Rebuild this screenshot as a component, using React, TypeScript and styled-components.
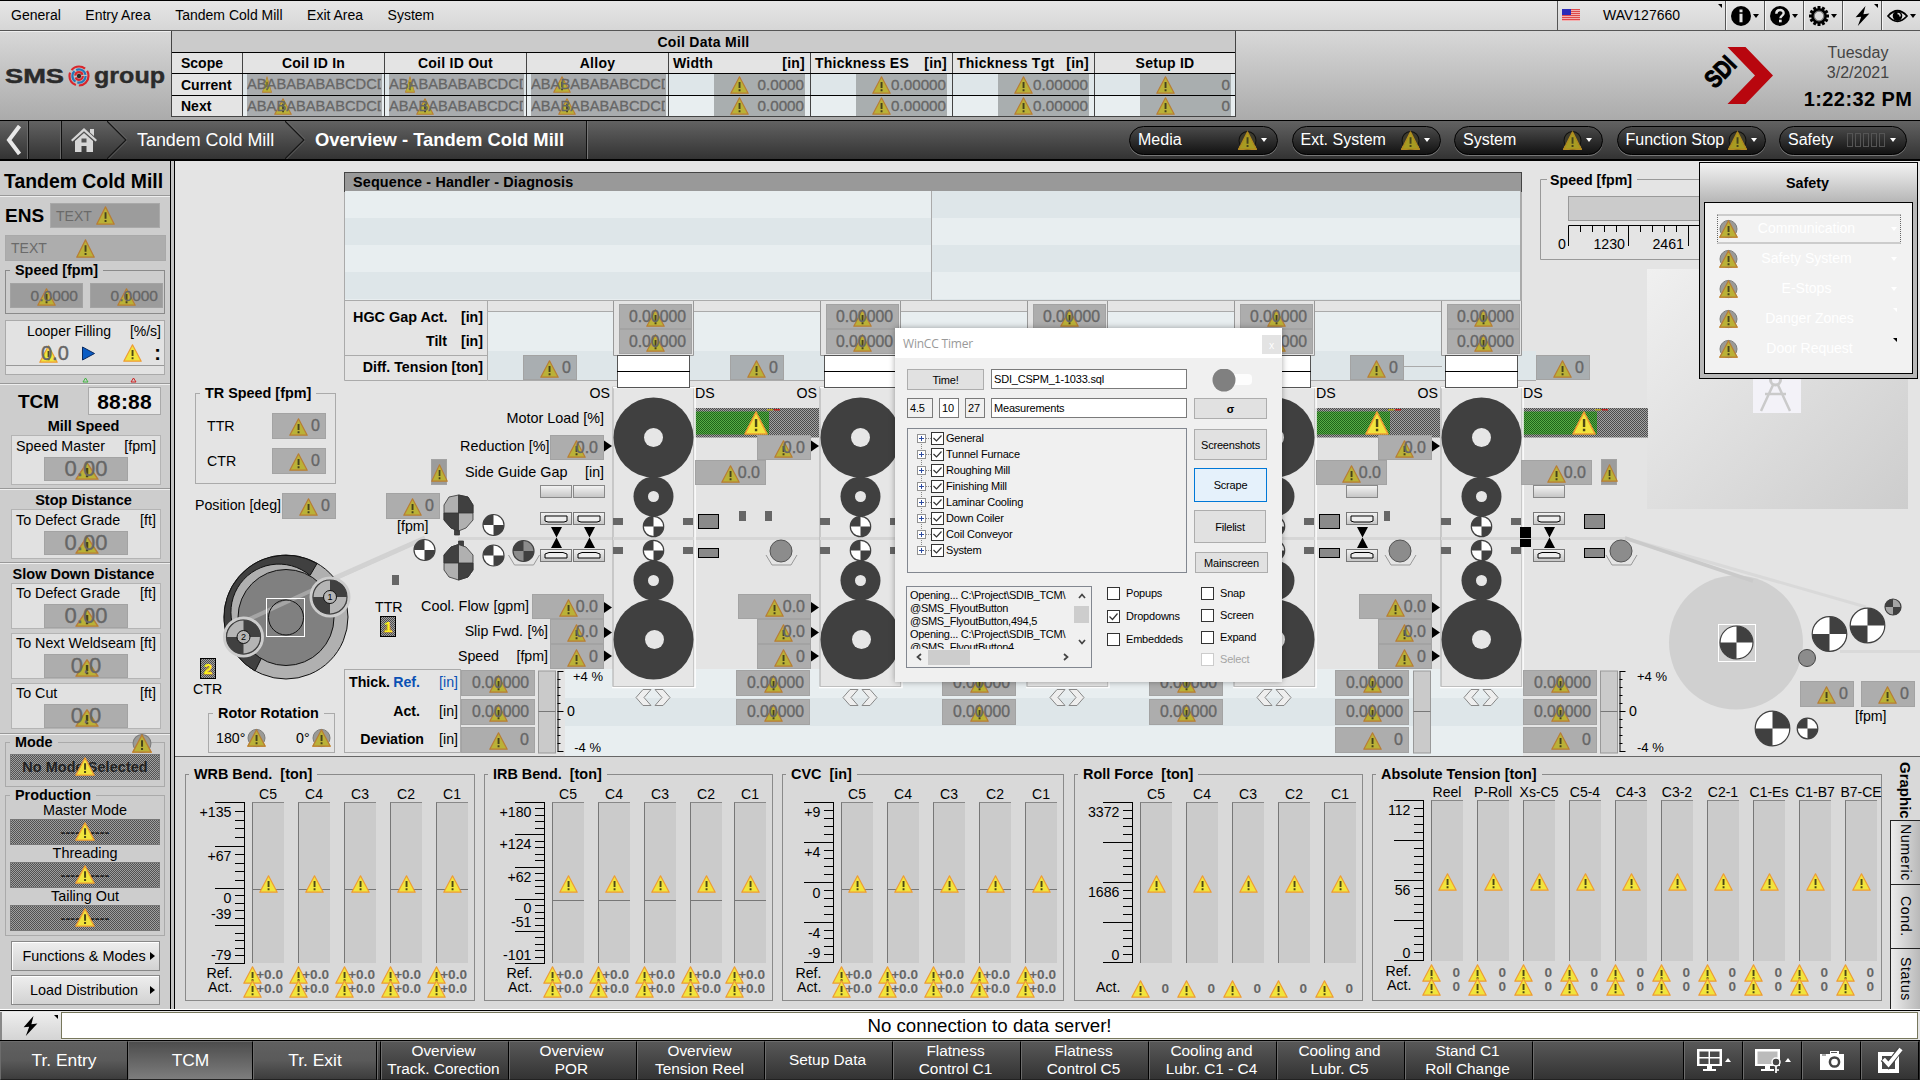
import React from 'react';
import styled, { createGlobalStyle, css } from 'styled-components';

const Global = createGlobalStyle`
  *{box-sizing:border-box}
  body{margin:0;width:1920px;height:1080px;overflow:hidden;background:#e4e4e4;
    font-family:"Liberation Sans",Arial,sans-serif;color:#000;line-height:1}
`;
const dither = css`
  background:conic-gradient(#525252 25%,#9e9e9e 0 50%,#525252 0 75%,#9e9e9e 0) 0 0/2px 2px;
`;
const Spacer = styled.div<{ $h: number }>`height:${p => p.$h}px;flex:none`;

/* ---------- warning symbols ---------- */
type WarnProps = { w?: number; h?: number; bright?: boolean; round?: boolean; dark?: boolean; className?: string };
const WarnSvg = styled.svg`overflow:visible`;
const WarnShape = ({ w = 19, h = 18, bright, round, dark, className }: WarnProps) => (
  <WarnSvg className={className} width={w} height={h} viewBox="0 0 19 18" preserveAspectRatio="none">
    {round && <path d="M9.5 .5L18.3 17.3H.7z" fill="#ecd62c" stroke="#e8a33a" />}
    {round && <ellipse cx="9.5" cy="9" rx="8.5" ry="8.6" fill={dark ? '#3c3a2c' : '#9a9a96'} stroke={dark ? '#111' : '#7c7c7c'} />}
    <path d="M9.5 .8L18.2 17.2H.8z" strokeWidth="1.2" strokeLinejoin="round"
      fill={dark ? '#a79b22' : bright ? '#f1e43c' : '#bab137'} stroke={dark ? '#b08a1e' : bright ? '#ee9c34' : '#b87d35'} />
    <path d="M8.6 6h1.9v6H8.6zM8.6 13.3h1.9v1.9H8.6z" fill={bright ? '#4c4814' : '#45421c'} />
  </WarnSvg>
);
const Warn = styled(WarnShape)`flex:none;display:block;`;
const PinnedWarn = styled(WarnShape)<{ $x: number; $y: number }>`
  position:absolute;left:${p => p.$x}px;top:${p => p.$y}px;
`;

/* ---------- value field ---------- */
const Field = styled.div<{ $w: number; $h: number; $size: number; $pad: number; $tone?: string; $bare?: boolean; $mid?: boolean }>`
  position:relative;flex:none;width:${p => p.$w}px;height:${p => p.$h}px;
  display:flex;align-items:center;justify-content:${p => (p.$mid ? 'center' : 'flex-end')};
  padding-right:${p => p.$pad}px;font-size:${p => p.$size}px;color:#666;
  background:${p => p.$tone ?? '#adadad'};border:${p => (p.$bare ? '0' : '1px solid #a3a3a3')};
  span{position:relative;-webkit-text-stroke:.35px #666;white-space:nowrap}
`;
type ValueProps = {
  w: number; h: number; text: string; tri: number; size?: number; pad?: number; tone?: string; bare?: boolean;
  mid?: boolean; tw?: number; ty?: number; bright?: boolean; className?: string;
};
const Value = ({ w, h, text, tri, size = 16, pad = 5, tone, bare, mid, tw = 19, ty, bright, className }: ValueProps) => (
  <Field className={className} $w={w} $h={h} $size={size} $pad={mid ? 0 : pad} $tone={tone} $bare={bare} $mid={mid}>
    <PinnedWarn w={tw} h={18} bright={bright} $x={tri - tw / 2 - (bare ? 0 : 1)} $y={ty ?? (h - 18) / 2} />
    <span>{text}</span>
  </Field>
);

/* ---------- top menu ---------- */
const Screen = styled.div`width:1920px;height:1080px;display:flex;flex-direction:column;position:relative;overflow:hidden`;
const MenuBar = styled.nav`
  height:31px;flex:none;display:flex;border-top:1px solid #000;border-bottom:1px solid #555;
  background:linear-gradient(#e6e6e6,#d6d6d6);font-size:14px;
`;
const MenuItems = styled.div`flex:1;display:flex;gap:24.5px;padding:0 0 1px 11px;align-items:center;white-space:nowrap`;
const UserCell = styled.div`
  width:168px;display:flex;align-items:center;gap:23px;padding:0 0 1px 4px;border-left:1px solid #555;position:relative;
`;
const ToolCell = styled.div`
  width:39px;display:flex;align-items:center;justify-content:center;gap:2px;border-left:1px solid #555;position:relative;
  box-shadow:inset 1px 0 #f4f4f4;
`;
const Corner = styled.i<{ $c?: string }>`
  position:absolute;right:3px;top:3px;border:2.5px solid;border-color:${p => p.$c ?? '#000'} ${p => p.$c ?? '#000'} transparent transparent;
`;
const Caret = styled.i<{ $c?: string; $up?: boolean }>`
  width:0;height:0;border:3.5px solid transparent;flex:none;
  ${p => p.$up ? css`border-top:0;border-bottom:4px solid ${p.$c ?? '#000'};` : css`border-bottom:0;border-top:4px solid ${p.$c ?? '#000'};`}
`;
const Flag = () => (
  <svg width="18" height="12"><rect width="18" height="12" fill="#f3b0b0" />
    {[0, 2, 4, 6, 8, 10].map(y => <rect key={y} y={y} width="18" height="1" fill="#dd4a4a" />)}
    <rect width="9" height="6" fill="#2b2bb8" /></svg>
);
const Bolt = () => (
  <svg width="15" height="20" viewBox="0 0 15 20"><path d="M10.5 0L.6 11.3l5.6-.6L2.8 20 14.4 7.4l-6 .8z" /></svg>
);

/* ---------- header ---------- */
const Header = styled.header`
  height:90px;flex:none;display:flex;background:linear-gradient(#d8d8d8,#ababab);border-bottom:1px solid #000;
`;
const LogoCell = styled.div`width:171px;flex:none;border-top:1px solid #eee`;
const CoilTable = styled.div`
  width:1065px;height:86px;border:1px solid #444;border-top:0;background:#cbcbcb;display:flex;flex-direction:column;
  font-weight:bold;font-size:14px;
`;
const CoilTitle = styled.div`height:21px;display:flex;align-items:center;justify-content:center;letter-spacing:.3px`;
const CoilRow = styled.div<{ $h: number; $bg: string }>`
  display:grid;grid-template-columns:70px repeat(6,142px) 1fr;height:${p => p.$h}px;border-top:1px solid #000;background:${p => p.$bg};
`;
const CoilCell = styled.div<{ $spread?: boolean; $scope?: boolean }>`
  border-left:1px solid #444;display:flex;align-items:center;letter-spacing:.25px;white-space:nowrap;
  justify-content:${p => (p.$spread ? 'space-between' : 'center')};padding:${p => (p.$spread ? '0 5px 0 4px' : '0')};
  ${p => p.$scope && css`border-left:0;justify-content:flex-start;padding-left:9px;background:#e4e4e4;letter-spacing:0;`}
`;
const CoilData = styled.div<{ $num?: boolean }>`
  border-left:1px solid #444;display:flex;padding-left:${p => (p.$num ? 45 : 4)}px;font-weight:normal;
`;
const Clip = styled.div`position:relative;width:135px;height:100%;background:#a9acae;color:#666;overflow:hidden;display:flex;align-items:center;
  font-size:14.7px;span{position:relative;width:134px;overflow:hidden;white-space:nowrap;-webkit-text-stroke:.3px #666}`;
const Brand = styled.div`width:560px;display:flex;justify-content:flex-end;padding:15px 21px 0 0`;
const Clock = styled.div`width:124px;display:flex;flex-direction:column;align-items:center;padding-top:12px;color:#444;font-size:16px;line-height:20px`;
const ClockTime = styled.strong`color:#000;font-size:20px;line-height:32px;white-space:nowrap;letter-spacing:.4px`;

/* ---------- navigation ---------- */
const NavBar = styled.nav`
  height:40px;flex:none;display:flex;align-items:stretch;border-bottom:2px solid #000;background:linear-gradient(#626262,#333);color:#fff;
`;
const NavCell = styled.div<{ $w: number }>`
  width:${p => p.$w}px;flex:none;display:flex;align-items:center;justify-content:center;border-right:1px solid #111;box-shadow:inset -1px 0 #6a6a6a;
`;
const Crumbs = styled.div`width:525px;flex:none;display:flex;align-items:center;border-right:1px solid #111;box-shadow:1px 0 #777;padding-left:7px`;
const Crumb = styled.span<{ $bold?: boolean; $w: number }>`
  font-size:${p => (p.$bold ? 18.4 : 17.9)}px;font-weight:${p => (p.$bold ? 'bold' : 'normal')};width:${p => p.$w}px;white-space:nowrap;padding:1px 0 0 10px;
`;
const CrumbArrow = () => (
  <svg width="20" height="38"><path d="M0 0L19 19L0 38" fill="none" stroke="#161616" strokeWidth="1.4" /><path d="M1.5 0L20.500 19L1.500 38" fill="none" stroke="#777" strokeWidth=".7" /></svg>
);
const PillGroup = styled.div`flex:1;display:flex;justify-content:flex-end;align-items:center;gap:13.5px;padding-right:13px`;
const Pill = styled.div<{ $w: number }>`
  width:${p => p.$w}px;height:29px;border-radius:15px;border:1px solid #000;box-shadow:0 1px #777;
  background:linear-gradient(#4a4a4a,#121212);display:flex;align-items:center;padding:0 10px 0 8px;font-size:16px;gap:4px;white-space:nowrap;
  >span{flex:1}
`;
const Bars = styled.div`display:flex;gap:2px;margin-right:1px;i{width:6px;height:14px;border:1px solid #555}`;

/* ---------- sidebar ---------- */
const Body = styled.div`height:848px;flex:none;display:flex`;
const Sidebar = styled.aside`
  width:175px;flex:none;background:linear-gradient(90deg,#cdcdcd 170px,#000 170px 171px,#c4c4c4 171px 174px,#000 174px);
  padding-right:5px;display:flex;flex-direction:column;
`;
const SideSection = styled.section<{ $h: number }>`
  height:${p => p.$h}px;flex:none;display:flex;flex-direction:column;border-top:1px solid #999;box-shadow:inset 0 1px #eee;
`;
const SideTitle = styled.h1`margin:0;height:34px;padding:8px 0 0 4px;display:flex;align-items:center;font-size:19.4px;white-space:nowrap`;
const EnsRow = styled.div`display:flex;align-items:center;padding:7px 0 0 5px;height:32px;font-size:19px;font-weight:bold;
  b{width:45px}`;
const TextField = styled.div<{ $w: number; $h: number; $tone: string; $ml?: number }>`
  position:relative;width:${p => p.$w}px;height:${p => p.$h}px;background:${p => p.$tone};border:1px solid #a9a9a9;margin-left:${p => p.$ml ?? 0}px;
  display:flex;align-items:center;padding-left:5px;color:#6a6a6a;font-size:14px;font-weight:normal;flex:none;
`;
const Frame = styled.div<{ $h: number; $w: number; $mt?: number; $ml?: number; $c?: string }>`
  position:relative;height:${p => p.$h}px;width:${p => p.$w}px;margin:${p => p.$mt ?? 0}px 0 0 ${p => p.$ml ?? 0}px;border:1px solid ${p => p.$c ?? '#8a8a8a'};flex:none;
`;
const Legend = styled.div<{ $bg: string; $l?: number }>`
  position:absolute;top:-8px;left:${p => p.$l ?? 4}px;padding:0 5px;background:${p => p.$bg};font-weight:bold;font-size:14.4px;line-height:15px;white-space:pre;
`;
const FieldRow = styled.div`display:flex;gap:7px;padding:12px 0 0 4px`;
const LooperBox = styled.div`
  margin:6px 0 0 5px;width:160px;height:55px;background:#e2e2e2;border:1px solid #aaa;display:flex;flex-direction:column;flex:none;
`;
const LooperHead = styled.div`display:flex;justify-content:space-between;padding:3px 3px 0 21px;font-size:14px;height:20px;white-space:nowrap`;
const LooperRow = styled.div`display:flex;align-items:center;height:25px;border-bottom:1px solid #999;position:relative;padding-left:35px;font-size:20px;color:#666;
  b{color:#000;margin-left:auto;padding-right:3px} span{position:relative;-webkit-text-stroke:.4px #666}`;
const PlayMark = styled.svg`margin-left:13px`;
const MarkRow = styled.div`height:9px;display:flex;gap:41px;padding:0 0 0 82px;align-items:center;flex:none`;
const TcmRow = styled.div`height:31px;display:flex;align-items:flex-end;justify-content:space-between;padding:0 9px 0 18px;font-size:19px;font-weight:bold;flex:none;
  >span{padding-bottom:4px}`;
const Digits = styled.div`width:73px;height:28px;background:#e6e6e6;border:1px solid #aaa;display:flex;align-items:center;justify-content:center;font-size:21px;letter-spacing:.2px`;
const SubHead = styled.h2`margin:0;font-size:14.5px;text-align:center;height:20px;line-height:22px;flex:none;white-space:nowrap;padding-right:3px`;
const Panel = styled.div<{ $h: number; $mb?: number }>`
  margin:0 0 ${p => p.$mb ?? 0}px 11px;width:150px;height:${p => p.$h}px;flex:none;background:#e1e1e1;border:1px solid #b4b4b4;display:flex;flex-direction:column;align-items:center;
`;
const PanelHead = styled.div`align-self:stretch;height:21px;display:flex;justify-content:space-between;align-items:center;padding:0 4px 1px;font-size:14.3px;white-space:nowrap`;
const ModeField = styled.div`
  ${dither};position:relative;width:150px;height:26px;margin-left:4px;border:1px solid #777;display:flex;align-items:center;justify-content:center;
  font-size:14.4px;color:#222;font-weight:bold;letter-spacing:.1px;white-space:nowrap;
`;
const ModeLabel = styled.div`height:17px;text-align:center;font-size:14.4px;line-height:16px`;
const SideButton = styled.button`
  font:14.4px "Liberation Sans",Arial,sans-serif;width:149px;height:30px;margin:0 0 4px 11px;border:1px solid #888;box-shadow:inset 1px 1px #fff;
  background:linear-gradient(#eee,#d2d2d2);display:flex;align-items:center;padding:0 4px 0 6px;white-space:nowrap;
  span{flex:1;text-align:center}
`;
const RightCaret = styled.i`border:4px solid transparent;border-left:5px solid #000;border-right:0`;

/* ---------- process canvas ---------- */
const Main = styled.main`flex:1;display:flex;flex-direction:column;background:#d9d9d9`;
const Canvas = styled.div`position:relative;height:596px;flex:none;background:#e4e4e4;border-bottom:1px solid #666;overflow:hidden`;
const Drawing = styled.svg`position:absolute;left:0;top:0;display:block`;
const at = css<{ $x: number; $y: number }>`position:absolute;left:${p => p.$x - 175}px;top:${p => p.$y - 161}px;`;
const PlacedValue = styled(Value)<{ $x: number; $y: number }>`${at}`;
const Label = styled.div<{ $x: number; $y: number; $size?: number; $bold?: boolean; $c?: string; $end?: boolean }>`
  ${at};font-size:${p => p.$size ?? 14.2}px;font-weight:${p => (p.$bold ? 'bold' : 'normal')};color:${p => p.$c ?? '#000'};white-space:pre;
  transform:translate(${p => (p.$end ? '-100%' : '0')},calc(-50% - 1px));
`;
const PlacedFrame = styled.div<{ $x: number; $y: number; $w: number; $h: number }>`${at};width:${p => p.$w}px;height:${p => p.$h}px;border:1px solid #aaa;`;
const PlacedRound = styled(WarnShape)<{ $x: number; $y: number }>`${at}`;
const Sequence = styled.div`${at};width:1178px;height:129px;border:1px solid #aaa;display:grid;grid-template-rows:18px 1fr`;
const SequenceHead = styled.div`background:#999;outline:1px solid #444;font-weight:bold;font-size:14.4px;padding-left:8px;display:flex;align-items:center;letter-spacing:.15px`;
const Stripes = styled.div`display:grid;grid-template-columns:587px 1fr`;
const StripeCol = styled.div<{ $flip?: boolean }>`
  border-right:1px solid #aaa;
  background:repeating-linear-gradient(${p => (p.$flip ? '#dee6e9,#dee6e9 27px,#e8eef0 27px,#e8eef0 54px' : '#e8eef0,#e8eef0 27px,#dee6e9 27px,#dee6e9 54px')});
`;

const Quad = ({ x, y, r, tr, f = '#fff' }: { x: number; y: number; r: number; tr?: boolean; f?: string }) => (
  <g><circle cx={x} cy={y} r={r} fill={f} stroke="#404040" strokeWidth="1.2" />
    {tr ? <path d={`M${x} ${y}V${y - r}A${r} ${r} 0 0 1 ${x + r} ${y}ZM${x} ${y}V${y + r}A${r} ${r} 0 0 1 ${x - r} ${y}Z`} fill="#404040" />
      : <path d={`M${x} ${y}V${y - r}A${r} ${r} 0 0 0 ${x - r} ${y}ZM${x} ${y}V${y + r}A${r} ${r} 0 0 0 ${x + r} ${y}Z`} fill="#404040" />}
  </g>
);
const Ring = ({ x, y, r, i, dx = 0 }: { x: number; y: number; r: number; i: number; dx?: number }) => (
  <g><circle cx={x} cy={y} r={r} fill="#404040" /><circle cx={x + dx} cy={y} r={i} fill="#e6e6e6" /></g>
);
const Roll = ({ x, y, quad }: { x: number; y: number; quad?: boolean }) => (
  <g><path d={`M${x - 15} ${y + 4}l6 10h19l6-10`} fill="none" stroke="#999" />
    {quad ? <Quad x={x} y={y} r={10.5} f="#8c8c8c" /> : <circle cx={x} cy={y} r="11" fill="#8c8c8c" stroke="#555" />}</g>
);
const Guide = ({ x }: { x: number }) => (
  <g>
    <rect x={x + .5} y="485.500" width="31" height="12" fill="url(#btn)" stroke="#888" />
    <rect x={x + .5} y="512.500" width="31" height="12" fill="url(#btn)" stroke="#777" />
    <path d={`M${x + 5} 516h22v5l-3 1H${x + 8}l-3-1z`} fill="#eee" stroke="#000" />
    <path d={`M${x + 11} 527h11L${x + 11} 548h11z`} fill="#000" />
    <rect x={x + .5} y="549.500" width="31" height="12" fill="url(#btn)" stroke="#777" />
    <path d={`M${x + 5} 558v-4l4-1.500h14l4 1.500v4z`} fill="#eee" stroke="#000" />
  </g>
);
const Blocks = ({ x }: { x: number }) => (
  <g fill="#8a8a8a" stroke="#000"><rect x={x + .5} y="514.500" width="20" height="14" /><rect x={x + .5} y="548.500" width="20" height="9" /></g>
);
const Motor = ({ x, w = 131 }: { x: number; w?: number }) => (
  <g>
    <rect x={x - 7} y="408" width={w} height="29.500" fill="url(#dither)" />
    <rect x={x} y="411.500" width="74" height="23" fill="url(#green)" />
    <rect x={x + 72} y="409" width="6" height="1.500" fill="#b0a020" /><rect x={x + 79} y="409" width="6" height="1.500" fill="#c02020" />
  </g>
);
const Deviation = ({ x, scale }: { x: number; scale?: boolean }) => (
  <g>
    <rect x={x} y="671" width="17" height="82" fill="#cacaca" stroke="#999" /><path d={`M${x} 711.500h17`} stroke="#777" />
    {scale && <g stroke="#000"><path d={`M${x + 19.5} 671.500v80M${x + 19} 671.500h6M${x + 19} 711.500h6M${x + 19} 751.500h6`} />
      {[679.5, 687.5, 695.5, 703.5, 719.5, 727.5, 735.5, 743.5].map(y => <path key={y} d={`M${x + 19} ${y}h3`} />)}</g>}
  </g>
);
const stands = [613, 820, 1027, 1234, 1441];

const PlantDrawing = () => (
  <Drawing width="1745" height="595" viewBox="175 161 1745 595">
    <defs>
      <pattern id="dither" width="2" height="2" patternUnits="userSpaceOnUse"><rect width="2" height="2" fill="#a2a2a2" /><path d="M0 0h1v1H0zM1 1h1v1H1z" fill="#4c4c4c" /></pattern>
      <pattern id="green" width="2" height="2" patternUnits="userSpaceOnUse"><rect width="2" height="2" fill="#58ac46" /><path d="M0 0h1v1H0zM1 1h1v1H1z" fill="#1e641a" /></pattern>
      <linearGradient id="btn" x2="0" y2="1"><stop stopColor="#f4f4f4" /><stop offset="1" stopColor="#c4c4c4" /></linearGradient>
      <linearGradient id="shade" x2="1" y2="1"><stop stopColor="#f0f0f0" /><stop offset="1" stopColor="#cdcdcd" /></linearGradient>
    </defs>
    {/* striped backdrops */}
    <rect x="488" y="311" width="953" height="40" fill="#e8eef0" /><rect x="488" y="351" width="1048" height="29" fill="#dee6e9" />
    <path d="M488 311.500H1441M488 380.500H1536" stroke="#aaa" />
    <rect x="565" y="669" width="958" height="87" fill="#e8eef0" /><rect x="565" y="698" width="958" height="28" fill="#dee6e9" />
    <path d="M344.500 300V380.500H487.500V300M344.500 355.500H487.500" stroke="#aaa" fill="none" />
    <rect x="344.500" y="669.500" width="116" height="83" fill="none" stroke="#aaa" />

    {/* speed gauge */}
    <path d="M1547 179.500H1540.500V259.500H1720M1637 179.500H1720" stroke="#999" fill="none" />
    <rect x="1568.500" y="196.500" width="160" height="24" fill="#cbcbcb" stroke="#999" />
    <path d="M1568.500 246V225.500H1720M1628.500 225V246M1688.500 225V246" stroke="#000" fill="none" />
    {[12, 24, 36, 48, 72, 84, 96, 108].map(d => <path key={d} d={`M${1568.5 + d} 225v7`} stroke="#000" />)}
    <rect x="1647" y="269" width="261" height="240" fill="url(#shade)" />
    <rect x="1753" y="370" width="48" height="43" fill="#f3f2f8" />
    <g stroke="#cacaca" fill="none" strokeWidth="3"><circle cx="1775.500" cy="380" r="5" /><path d="M1773 385L1761 411M1778 385L1790 411M1765 394H1786" strokeWidth="2.500" /></g>

    {/* strip */}
    <path d="M243 619L425 538" stroke="#d2d2d2" strokeWidth="5" />
    <circle cx="1736" cy="642.500" r="67" fill="#d0d0d0" />
    <path d="M1840 651.500H1920" stroke="#d9d9d9" strokeWidth="3" />
    <path d="M1625 538L1866 607" stroke="#d9d9d9" strokeWidth="3" /><path d="M1625 538L1753 581" stroke="#cacaca" strokeWidth="3.500" />

    {/* carousel reel */}
    <circle cx="286" cy="617" r="62" fill="#b0b0b0" stroke="#111" />
    <path d="M317 563.500A62 62 0 1 0 255 671L262 657A48 48 0 1 1 310 575.500Z" fill="#404040" stroke="#111" />
    <circle cx="286" cy="617.500" r="48" fill="#808080" stroke="#111" />
    <path d="M243 622L330 582" stroke="#b5b5b5" strokeWidth="4" opacity=".7" /><path d="M325 583L425 538" stroke="#d2d2d2" strokeWidth="4" />
    <circle cx="286" cy="617.500" r="17.500" fill="none" stroke="#111" /><rect x="266.500" y="598.500" width="38" height="38" fill="none" stroke="#fff" />
    {([[330, 597, '1'], [243.5, 637, '2']] as [number, number, string][]).map(([x, y, n]) => (
      <g key={n}><circle cx={x} cy={y} r="19" fill="none" stroke="#ccc" strokeWidth="3" />
        <Quad x={x} y={y} r={17} tr f="#b5b5b5" />
        <circle cx={x} cy={y} r="6.500" fill="#b5b5b5" stroke="#111" /><text x={x} y={y + 3} fontSize="9" textAnchor="middle">{n}</text></g>
    ))}
    <rect x="392" y="575" width="7" height="10" fill="#666" />
    {([[380, 616, '1'], [200, 658, '2']] as [number, number, string][]).map(([x, y, n]) => (
      <g key={n}><rect x={x + .5} y={y + .5} width="15" height="20" fill="url(#dither)" stroke="#000" />
        <path d={`M${x + 8} ${y + 5}l5 12h-10z`} fill="#c08a30" opacity=".6" />
        <text x={x + 8} y={y + 16} fontSize="15.500" fontWeight="bold" fill="#ffee1a" textAnchor="middle">{n}</text></g>
    ))}
    <path d="M458 538.500H1625" stroke="#d6d6d6" strokeWidth="3" />

    {/* shear drums and deflector rolls */}
    <g stroke="#333" strokeWidth=".8">
      <path d="M454.500 528h5v7h-5z" fill="#404040" /><path d="M458.500 495L468 497L473 505V520L466 528L458.500 531L451 528L444 520V505L449 497Z" fill="#b0b0b0" />
      <path d="M458.500 495L468 497L473 505V513H458.500ZM458.500 531L451 528L444 520V513H458.500Z" fill="#404040" />
      <path d="M458.500 541h5v8h-5z" fill="#404040" /><path d="M458.500 544.500L466 547L473 555V570L468 577L458.500 580L449 577L444 570V555L451 547Z" fill="#b0b0b0" />
      <path d="M458.500 544.500L451 547L444 555V563H458.500ZM458.500 580L468 577L473 570V563H458.500Z" fill="#404040" />
    </g>
    <Quad x={493.5} y={525} r={10.5} /><Quad x={424.5} y={550} r={10.5} /><Quad x={493.5} y={555.5} r={10.5} /><Roll x={523.5} y={551} quad />
    <Guide x={540} /><Guide x={573} />

    {/* rolling stands */}
    {stands.map((x, i) => (
      <g key={x}>
        <Motor x={x + 82} w={i === 4 ? 132 : 131} />
        <path d={`M${x + .5} 300.500V355.500H${x + 80.5}V300.500`} fill="#e4e4e4" stroke="#999" />
        <rect x={x} y="387" width="81" height="299.500" fill="#e6e6e6" stroke="#aaa" /><path d={`M${x} 387.500h82v300h-83`} fill="none" stroke="#fff" strokeWidth="1.500" />
        <rect x={x + 4.5} y="355.500" width="72" height="32" fill="#fff" stroke="#555" /><path d={`M${x + 4} 371.500h73`} stroke="#000" />
        <path d={`M${x} 538.500h81`} stroke="#d6d6d6" strokeWidth="3" />
        <path d={`M${x} 518h10v7h-10zM${x} 547h10v7h-10zM${x + 70} 518h10v7h-10zM${x + 70} 547h10v7h-10z`} fill="#666" />
        <Ring x={x + 40.5} y={437.500} r={40} i={9.5} /><Ring x={x + 40.5} y={496.500} r={20} i={5.5} />
        <Quad x={x + 40.5} y={526.500} r={10.2} /><Quad x={x + 40.5} y={550.500} r={10.2} />
        <Ring x={x + 40.5} y={580.500} r={20} i={5.5} /><Ring x={x + 40.5} y={639.500} r={40} i={9.5} dx={i === 4 ? 0 : 1} />
        <path d={`M${x + 38} 689.500h-8l-7 8l7 8h8l-7-8zM${x + 42} 689.500h8l7 8l-7 8h-8l7-8z`} fill="#eee" stroke="#888" />
        {[446, 607.5, 632.5, 656].map(y => <path key={y} d={`M${x - 9} ${y - 5.500}l8 5.500l-8 5.500z`} fill="#000" />)}
        {i < 4 && <Blocks x={x + 85} />}
        {i < 3 && <path d={`M${x + 126} 511h7v10h-7zM${x + 152} 511h7v10h-7z`} fill="#666" />}
        {i < 4 && <Roll x={i === 3 ? 1400 : x + 168} y={551} />}
      </g>
    ))}
    <Guide x={1346} /><rect x="1384" y="511" width="6" height="10" fill="#666" />
    <Guide x={1533} /><Blocks x={1584} /><Roll x={1621} y={551} />
    <path d="M1520 527h11v20h-11z" fill="#000" /><path d="M1520 538.500h11" stroke="#bbb" />
    <path d="M1385 366.500h57" stroke="#aaa" />
    <Deviation x={538.5} scale /><Deviation x={1413.5} /><Deviation x={1600.5} scale />

    {/* exit coiler */}
    <rect x="1718.500" y="624.500" width="37" height="37" fill="none" stroke="#fff" /><Quad x={1736.5} y={642.5} r={16.5} tr />
    <Quad x={1829.5} y={634} r={17.3} tr /><Quad x={1867.5} y={625.5} r={17.3} tr /><Quad x={1893} y={607} r={8} f="#a5a5a5" />
    <circle cx="1807" cy="658" r="8.500" fill="#8c8c8c" stroke="#444" /><Quad x={1772.5} y={728.5} r={17.3} tr /><Quad x={1807.5} y={728.5} r={10.3} />
  </Drawing>
);

const ProcessCanvas = () => (
  <Canvas>
    <PlantDrawing />
    <Sequence $x={344} $y={172}>
      <SequenceHead>Sequence - Handler - Diagnosis</SequenceHead>
      <Stripes><StripeCol /><StripeCol $flip /></Stripes>
    </Sequence>
    <Label $x={353} $y={317.5} $bold $size={14.4}>HGC Gap Act.</Label><Label $x={483} $y={317.5} $bold $end>[in]</Label>
    <Label $x={447} $y={342} $bold $end>Tilt</Label><Label $x={483} $y={342} $bold $end>[in]</Label>
    <Label $x={483} $y={368} $bold $end>Diff. Tension [ton]</Label>
    <Label $x={1550} $y={180.5} $bold>Speed [fpm]</Label>
    <Label $x={1566} $y={244.5} $end>0</Label><Label $x={1625} $y={244.5} $end>1230</Label><Label $x={1684} $y={244.5} $end>2461</Label>

    {stands.map(x => (
      <React.Fragment key={x}>
        <PlacedValue $x={x + 6} $y={304} w={73} h={25} text="0.00000" tri={36.5} size={15.8} />
        <PlacedValue $x={x + 6} $y={329} w={73} h={25} text="0.00000" tri={36.5} size={15.8} />
        <Label $x={x - 3} $y={394} $end>OS</Label><Label $x={x + 82} $y={394}>DS</Label>
        <PlacedRound $x={x + 131} $y={410.500} w={24} h={24} bright />
      </React.Fragment>
    ))}
    {[523, 730, 937, 1144, 1350, 1536].map(x => <PlacedValue key={x} $x={x} $y={355} w={54} h={25} text="0" tri={26.5} tone="#a9aeb1" />)}
    {[604, 811, 1018, 1225, 1432].map((r, i) => (
      <React.Fragment key={r}>
        <PlacedValue $x={r - 54} $y={435} w={54} h={25} text="0.0" tri={26.5} />
        <PlacedValue $x={r - (i ? 73 : 72)} $y={594} w={i ? 73 : 72} h={25} text="0.0" tri={36} />
        <PlacedValue $x={r - 54} $y={619} w={54} h={25} text="0.0" tri={26.5} />
        <PlacedValue $x={r - 54} $y={644} w={54} h={25} text="0" tri={26.5} />
      </React.Fragment>
    ))}
    {[695, 902, 1109, 1316, 1521].map(x => <PlacedValue key={x} $x={x} $y={460} w={71} h={25} text="0.0" tri={35} />)}
    {[461, 736, 942, 1149, 1335, 1523].map(x => (
      <React.Fragment key={x}>
        <PlacedValue $x={x} $y={670} w={74} h={26} text="0.00000" tri={37} size={15.8} />
        <PlacedValue $x={x} $y={699} w={74} h={26} text="0.00000" tri={37} size={15.8} />
        {(x < 500 || x > 1300) && <PlacedValue $x={x} $y={727} w={74} h={26} text="0" tri={37} />}
      </React.Fragment>
    ))}

    <PlacedFrame $x={195} $y={393} $w={141} $h={91}><Legend $bg="#e4e4e4">TR Speed [fpm]</Legend></PlacedFrame>
    <Label $x={207} $y={426.5}>TTR</Label><Label $x={207} $y={461.5}>CTR</Label>
    <PlacedValue $x={272} $y={413} w={54} h={26} text="0" tri={26.5} /><PlacedValue $x={272} $y={448} w={54} h={26} text="0" tri={26.5} />
    <Label $x={195} $y={505.500}>Position [deg]</Label>
    <PlacedValue $x={282} $y={493} w={54} h={26} text="0" tri={26.5} /><PlacedValue $x={386} $y={493} w={54} h={26} text="0" tri={26.5} />
    <Label $x={397} $y={527}>[fpm]</Label>
    <PlacedValue $x={431} $y={459} w={16} h={26} text="" tri={8} tw={17} tone="#9c9c9c" /><PlacedValue $x={1601} $y={459} w={16} h={26} text="" tri={8} tw={17} tone="#9c9c9c" />
    <Label $x={604} $y={418.5} $end $size={14.4}>Motor Load [%]</Label>
    <Label $x={460} $y={446.500} $size={14.4}>Reduction [%]</Label>
    <Label $x={465} $y={472.500} $size={14.4}>Side Guide Gap</Label><Label $x={604} $y={472.5} $end>[in]</Label>
    <Label $x={375} $y={607.5}>TTR</Label><Label $x={193} $y={689.500}>CTR</Label>
    <Label $x={421} $y={606.500} $size={14.4}>Cool. Flow</Label><Label $x={529} $y={606.500} $end>[gpm]</Label>
    <Label $x={523} $y={632} $end>Slip Fwd.</Label><Label $x={548} $y={632} $end>[%]</Label>
    <Label $x={499} $y={657} $end>Speed</Label><Label $x={548} $y={657} $end>[fpm]</Label>
    <PlacedFrame $x={208} $y={713} $w={127} $h={40}><Legend $bg="#e4e4e4">Rotor Rotation</Legend></PlacedFrame>
    <Label $x={216} $y={738.5}>180°</Label><Label $x={296} $y={738.5}>0°</Label>
    <PlacedRound $x={247} $y={729} round w={19} h={18} /><PlacedRound $x={312} $y={729} round w={19} h={18} />
    <Label $x={349} $y={683} $bold>Thick. </Label><Label $x={420} $y={683} $bold $c="#0b50b4" $end>Ref.</Label><Label $x={458} $y={683} $c="#0b50b4" $end>[in]</Label>
    <Label $x={420} $y={712} $bold $end>Act.</Label><Label $x={458} $y={712} $end>[in]</Label>
    <Label $x={424} $y={740} $bold $end>Deviation</Label><Label $x={458} $y={740} $end>[in]</Label>
    <Label $x={603} $y={677} $end $size={13}>+4 %</Label><Label $x={567} $y={712}>0</Label><Label $x={601} $y={748} $end $size={13}>-4 %</Label>
    <Label $x={1637} $y={677} $size={13}>+4 %</Label><Label $x={1629} $y={712}>0</Label><Label $x={1637} $y={748} $size={13}>-4 %</Label>
    <PlacedValue $x={1800} $y={681} w={54} h={26} text="0" tri={26.5} /><PlacedValue $x={1861} $y={681} w={54} h={26} text="0" tri={26.5} />
    <Label $x={1855} $y={717}>[fpm]</Label>
  </Canvas>
);

/* ---------- charts ---------- */
const ChartArea = styled.div`flex:1;display:flex;padding:17px 0 0 10px;position:relative`;
const ChartFrame = styled.section<{ $w: number; $mr: number; $top: number }>`
  position:relative;width:${p => p.$w}px;height:227px;margin-right:${p => p.$mr}px;border:1px solid #8a8a8a;flex:none;display:flex;padding-top:${p => p.$top}px;
`;
const AxisSvg = styled.svg`flex:none;display:block;overflow:visible;font-size:14.2px`;
const Columns = styled.div`display:flex;gap:14px`;
const Column = styled.div<{ $pull?: boolean }>`width:32px;flex:none;margin-left:${p => (p.$pull ? -2 : 0)}px;display:flex;flex-direction:column`;
const ColumnName = styled.div`height:16px;font-size:14px;display:flex;justify-content:center;align-items:center;white-space:nowrap`;
const Bar = styled.div<{ $line?: number }>`
  height:161px;border-left:1px solid #777;border-top:1px solid #888;display:flex;justify-content:center;padding-top:72px;margin-bottom:5px;
  background:${p => p.$line ? `linear-gradient(#cbcbcb ${p.$line}px,#777 ${p.$line}px ${p.$line + 1}px,#cbcbcb ${p.$line + 1}px)` : '#cbcbcb'};
`;
const Readout = styled.div<{ $end: number }>`
  position:relative;height:14px;font-size:13.6px;color:#666;font-weight:bold;display:flex;align-items:center;justify-content:flex-end;padding-right:${p => p.$end}px;
  span{position:relative}
`;
type ChartDef = {
  title: string; w: number; mr: number; axis: number; majors: number[]; labels: [string, number][]; names: string[];
  line?: number; rows: string[]; value: string; top?: number; pullLast?: boolean;
};
const Chart = ({ title, w, mr, axis, majors, labels, names, line, rows, value, top = 11, pullLast }: ChartDef) => (
  <ChartFrame $w={w} $mr={mr} $top={top}>
    <Legend $bg="#d9d9d9" $l={3}>{title}</Legend>
    <AxisSvg width={axis - 1} height="210">
      <path d={`M${axis - 8.5} ${majors[0] + 16.5}V${majors[majors.length - 1] + 16.5}`} stroke="#000" />
      {majors.map((m, i) => (
        <g key={m} stroke="#000"><path d={`M${axis - 38} ${Math.round(m) + 16.5}H${axis - 8}`} />
          {i < majors.length - 1 && [1, 2, 3, 4].map(k => (
            <path key={k} d={`M${axis - 18} ${Math.round(m + (majors[i + 1] - m) * k / 5) + 16.5}H${axis - 8}`} />))}</g>
      ))}
      {labels.map(([t, y]) => <text key={t} x={axis - 21.5} y={y + 20.7} textAnchor="end">{t}</text>)}
      {rows.map(r => <text key={r} x={axis - 20.5} y={r === 'Ref.' ? 191.5 : 205.5} textAnchor="end">{r}</text>)}
    </AxisSvg>
    <Columns>
      {names.map((n, i) => (
        <Column key={n} $pull={pullLast && i === names.length - 1}>
          <ColumnName>{n}</ColumnName>
          <Bar $line={line}><Warn w={19} h={18} bright /></Bar>
          {['Ref.', 'Act.'].map(r => (
            <Readout key={r} $end={value === '0' ? 3 : 1}>
              {rows.includes(r) && <><PinnedWarn w={19} h={18} bright $x={-9} $y={-2} /><span>{value}</span></>}
            </Readout>
          ))}
        </Column>
      ))}
    </Columns>
  </ChartFrame>
);
const C = ['C5', 'C4', 'C3', 'C2', 'C1'];
const charts: ChartDef[] = [
  { title: 'WRB Bend.  [ton]', w: 290, mr: 9, axis: 67, majors: [0, 44, 86, 123, 161], labels: [['+135', 10], ['+67', 54], ['0', 96], ['-39', 112], ['-79', 153]], names: C, line: 86, rows: ['Ref.', 'Act.'], value: '+0.0' },
  { title: 'IRB Bend.  [ton]', w: 289, mr: 9, axis: 68, majors: [0, 32, 65, 97, 129, 161], labels: [['+180', 10], ['+124', 42], ['+62', 75], ['0', 106], ['-51', 120], ['-101', 153]], names: C, line: 97, rows: ['Ref.', 'Act.'], value: '+0.0', pullLast: true },
  { title: 'CVC  [in]', w: 282, mr: 10, axis: 59, majors: [0, 40, 80, 120, 160], labels: [['+9', 10], ['+4', 50], ['0', 91], ['-4', 131], ['-9', 151]], names: C, line: 86, rows: ['Ref.', 'Act.'], value: '+0.0' },
  { title: 'Roll Force  [ton]', w: 289, mr: 9, axis: 66, majors: [0, 40, 80, 120, 160], labels: [['3372', 10], ['1686', 90], ['0', 153]], names: C, rows: ['Act.'], value: '0' },
  { title: 'Absolute Tension [ton]', w: 510, mr: 8, axis: 59, majors: [0, 40, 80, 120, 160], labels: [['112', 10], ['56', 90], ['0', 153]], names: ['Reel', 'P-Roll', 'Xs-C5', 'C5-4', 'C4-3', 'C3-2', 'C2-1', 'C1-Es', 'C1-B7', 'B7-CE'], rows: ['Ref.', 'Act.'], value: '0', top: 9 },
];
const TabStrip = styled.div`width:30px;margin-top:-17px;display:flex;flex-direction:column`;
const Tab = styled.div<{ $h: number; $on?: boolean }>`
  height:${p => p.$h}px;writing-mode:vertical-rl;display:flex;align-items:center;justify-content:center;padding-top:${p => (p.$on ? 4 : 0)}px;
  font-size:${p => (p.$on ? 15 : 14.2)}px;font-weight:${p => (p.$on ? 'bold' : 'normal')};letter-spacing:${p => (p.$on ? 0 : .6)}px;
  ${p => !p.$on && 'border-left:1px solid #222;border-top:1px solid #222;background:linear-gradient(90deg,#ececec,#b9b9b9);'}
`;

/* ---------- message bar and footer ---------- */
const MessageBar = styled.div`height:31px;flex:none;display:flex;border-top:1px solid #fff;background:#e4e4e4;box-shadow:inset 0 1px #000;padding-top:2px`;
const AlarmCell = styled.div`width:61px;display:flex;align-items:center;justify-content:center;position:relative;background:linear-gradient(#eee,#d4d4d4);border-left:2px solid #888;padding-right:3px`;
const Message = styled.div`width:1857px;height:27px;padding-top:1px;border:1px solid #77775c;background:#fff;display:flex;align-items:center;justify-content:center;font-size:18.7px`;
const Footer = styled.footer`flex:1;display:flex;background:#2b2b2b;border-top:1px solid #000;color:#fff`;
const FootButton = styled.div<{ $w: number; $big?: boolean; $on?: boolean }>`
  width:${p => p.$w}px;flex:none;display:flex;align-items:center;justify-content:center;text-align:center;gap:3px;
  font-size:${p => (p.$big ? 17.4 : 15.4)}px;line-height:18px;white-space:pre;padding:0 ${p => (p.$w > 100 && !p.$big ? 3 : 0)}px 1px 0;
  background:${p => (p.$on ? 'linear-gradient(#4d4d4d,#7d7d7d)' : p.$big ? 'linear-gradient(#606060,#5a5a5a 50%,#3c3c3c)' : 'linear-gradient(#585858,#333)')};
  border:1px solid;border-color:#6c6c6c #000 #222 #6c6c6c;
`;

/* ---------- safety popup ---------- */
const SafetyPopup = styled.section`
  position:absolute;left:1699px;top:162px;width:219px;height:217px;border:1px solid #000;background:linear-gradient(#f2f2f2,#b8b8b8 38px,#b8b8b8);
  display:flex;flex-direction:column;padding:0 4px 4px;
`;
const PopupTitle = styled.div`height:39px;display:flex;align-items:center;justify-content:center;font-weight:bold;font-size:14.4px;padding:2px 2px 0 0`;
const PopupBody = styled.div`flex:1;border:1px solid #000;background:#f2f2f2;padding:11px 11px 0 12px;display:flex;flex-direction:column`;
const PopupItem = styled.div<{ $focus?: boolean }>`
  height:30px;flex:none;display:flex;align-items:center;position:relative;color:#fff;font-size:14px;padding:0 3px 0 1px;
  border:1px solid transparent;${p => p.$focus && 'border:1px dotted #666;border-top:2px solid #ccc;border-bottom:2px solid #ccc;'}
  >span{flex:1;text-align:center;margin:0 -3px 2px -19px}
`;

/* ---------- timer dialog ---------- */
const Dialog = styled.section`
  position:absolute;left:895px;top:328px;width:387px;height:354px;background:#f0f0f0;box-shadow:0 0 6px rgba(0,0,0,.35);font-size:11px;letter-spacing:-.2px;
  display:flex;flex-direction:column;
`;
const DialogTitle = styled.div`height:30px;flex:none;background:#fff;color:#999;font:12px "Open Sans","Noto Sans",sans-serif;display:flex;align-items:center;justify-content:space-between;padding:0 1px 0 8px`;
const CloseBox = styled.span`width:19px;height:19px;background:#e3e3e3;color:#fff;display:flex;align-items:center;justify-content:center;font-size:10px;align-self:flex-start;margin-top:7px`;
const DialogBody = styled.div`display:flex;padding:11px 14px 0 12px;height:215px;flex:none;gap:7px`;
const DialogLeft = styled.div`width:280px;display:flex;flex-direction:column`;
const DialogRight = styled.div`width:74px;display:flex;flex-direction:column;align-items:flex-start`;
const Line = styled.div<{ $h: number; $gap: number }>`display:flex;gap:${p => p.$gap}px;height:${p => p.$h}px;align-items:flex-start`;
const WinButton = styled.button<{ $w: number; $h: number; $mb?: number; $hot?: boolean; $ml?: number }>`
  font:11px "Liberation Sans",Arial,sans-serif;letter-spacing:-.2px;padding:0;width:${p => p.$w}px;height:${p => p.$h}px;margin:0 0 ${p => p.$mb ?? 0}px ${p => p.$ml ?? 0}px;
  background:${p => (p.$hot ? '#e5f1fb' : '#e1e1e1')};border:1px solid ${p => (p.$hot ? '#0078d7' : '#adadad')};flex:none;
`;
const WinInput = styled.div<{ $w: number; $ro?: boolean }>`
  width:${p => p.$w}px;height:20px;border:1px solid #7a7a7a;background:${p => (p.$ro ? '#f0f0f0' : '#fff')};display:flex;align-items:center;padding-left:2px;flex:none;
`;
const Tree = styled.div`height:145px;border:1px solid #828790;padding:1px 0 0 9px;display:flex;flex-direction:column`;
const TreeItem = styled.div`height:16px;display:flex;align-items:center;gap:2px;
  svg{flex:none}`;
const ToggleRow = styled.div`height:29px;flex:none;padding:0 0 0 18px`;
const CheckMark = ({ on, dim }: { on?: boolean; dim?: boolean }) => (
  <svg width="13" height="13"><rect x=".5" y=".5" width="12" height="12" fill="#fff" stroke={dim ? '#ccc' : '#333'} />{on && <path d="M2.500 6.500l3 3l5-6" fill="none" stroke="#333" strokeWidth="1.200" />}</svg>
);
const DialogFoot = styled.div`display:flex;padding:13px 0 0 11px`;
const LogBox = styled.div`width:186px;height:82px;border:1px solid #828790;display:grid;grid-template-columns:166px 15px;grid-template-rows:62px 16px;margin-right:15px;gap:0 1px`;
const LogText = styled.div`overflow:hidden;white-space:pre;line-height:12.9px;padding:2px 0 0 3px;letter-spacing:-.28px`;
const VScroll = styled.div`background:#f0f0f0;display:flex;flex-direction:column;align-items:center;justify-content:space-between;padding:5px 0 3px;
  i{width:15px;height:17px;background:#cdcdcd;margin-bottom:10px}`;
const HScroll = styled.div`display:flex;align-items:center;padding:0 3px 0 8px;
  i{width:44px;height:15px;background:#cdcdcd;margin:0 92px 0 5px}
  svg{flex:none}`;
const CheckCol = styled.div<{ $step: number; $w: number }>`width:${p => p.$w}px;display:flex;flex-direction:column;padding-top:1px;
  >div{height:${p => p.$step}px;display:flex;gap:6px;align-items:flex-start;line-height:13px}`;
const Faded = styled.span`color:#a5a5a5`;
const Chev = ({ d }: { d: string }) => <svg width="8" height="8"><path d={d} fill="none" stroke="#444" strokeWidth="1.700" /></svg>;

const TimerDialog = () => (
  <Dialog>
    <DialogTitle><span>WinCC Timer</span><CloseBox>x</CloseBox></DialogTitle>
    <DialogBody>
      <DialogLeft>
        <Line $h={29} $gap={7}><WinButton $w={77} $h={21}>Time!</WinButton><WinInput $w={196}>SDI_CSPM_1-1033.sql</WinInput></Line>
        <Line $h={30} $gap={6}><WinInput $w={26} $ro>4.5</WinInput><WinInput $w={20}>10</WinInput><WinInput $w={20} $ro>27</WinInput><WinInput $w={196}>Measurements</WinInput></Line>
        <Tree>
          {['General', 'Tunnel Furnace', 'Roughing Mill', 'Finishing Mill', 'Laminar Cooling', 'Down Coiler', 'Coil Conveyor', 'System'].map((t, i) => (
            <TreeItem key={t}>
              <svg width="27" height="16">{i < 7 && <path d="M4.500 12v4" stroke="#888" strokeDasharray="1 1" />}{i > 0 && <path d="M4.500 0v4" stroke="#888" strokeDasharray="1 1" />}
                <path d="M9 8.500h5" stroke="#888" strokeDasharray="1 1" /><rect x=".5" y="4.500" width="8" height="8" fill="#fff" stroke="#919191" /><path d="M2 8.500h5M4.500 6v5" stroke="#2c4aa0" />
                <g transform="translate(14 1)"><rect x=".5" y="1.500" width="12" height="12" fill="#fff" stroke="#333" /><path d="M2.500 7l3 3l5-5.500" fill="none" stroke="#333" strokeWidth="1.200" /></g></svg>
              {t}
            </TreeItem>
          ))}
        </Tree>
      </DialogLeft>
      <DialogRight>
        <ToggleRow><svg width="46" height="26"><rect x="20" y="5" width="20" height="11" rx="4" fill="#fdfdfd" /><circle cx="12" cy="11" r="11.500" fill="#808080" /></svg></ToggleRow>
        <WinButton $w={73} $h={21} $mb={10}><b>σ</b></WinButton>
        <WinButton $w={73} $h={31} $mb={8}>Screenshots</WinButton>
        <WinButton $w={73} $h={34} $mb={8} $hot>Scrape</WinButton>
        <WinButton $w={72} $h={33} $mb={9}>Filelist</WinButton>
        <WinButton $w={73} $h={21} $ml={1}>Mainscreen</WinButton>
      </DialogRight>
    </DialogBody>
    <DialogFoot>
      <LogBox>
        <LogText>{'Opening... C:\\Project\\SDIB_TCM\\\n@SMS_FlyoutButton\n@SMS_FlyoutButton,494,5\nOpening... C:\\Project\\SDIB_TCM\\\n@SMS_FlyoutButton4'}</LogText>
        <VScroll><Chev d="M1 6L4 2.500L7 6" /><i /><Chev d="M1 2L4 5.500L7 2" /></VScroll>
        <HScroll><Chev d="M6 1L2.500 4L6 7" /><i /><Chev d="M2 1L5.500 4L2 7" /></HScroll>
      </LogBox>
      <CheckCol $step={23} $w={94}><div><CheckMark />Popups</div><div><CheckMark on />Dropdowns</div><div><CheckMark />Embeddeds</div></CheckCol>
      <CheckCol $step={22} $w={70}><div><CheckMark />Snap</div><div><CheckMark />Screen</div><div><CheckMark />Expand</div><div><CheckMark dim /><Faded>Select</Faded></div></CheckCol>
    </DialogFoot>
  </Dialog>
);

const abText = 'ABABABABABCDCDCD';
const CoilRows = ({ next }: { next?: boolean }) => {
  const tri = next ? [36, 36, 36] : [20, 21, 31];
  const nums = ['0.0000', '0.00000', '0.00000', '0'];
  return (
    <CoilRow $h={next ? 21 : 22} $bg={next ? '#e8eef0' : '#dee6e9'}>
      <CoilCell $scope>{next ? 'Next' : 'Current'}</CoilCell>
      {tri.map((t, i) => {
        const tw = !next && i < 2 ? 10 : 18;
        return <CoilData key={i}><Clip><PinnedWarn w={tw} h={17} $x={t - tw / 2} $y={2} /><span>{abText}</span></Clip></CoilData>;
      })}
      {nums.map((t, i) => <CoilData key={i} $num><Value w={91} h={next ? 20 : 21} text={t} tri={25.5} size={15.2} pad={1} tone="#a9aeaf" bare /></CoilData>)}
    </CoilRow>
  );
};

const footTabs = ['Overview\nTrack. Corection', 'Overview\nPOR', 'Overview\nTension Reel', 'Setup Data', 'Flatness\nControl C1', 'Flatness\nControl C5', 'Cooling and\nLubr. C1 - C4', 'Cooling and\nLubr. C5', 'Stand C1\nRoll Change'];
const distances: [string, string][] = [['To Defect Grade', '0.00'], ['To Next Weldseam', '0.0'], ['To Cut', '0.0']];

const BigValue = ({ text }: { text: string }) => <Value w={84} h={24} text={text} tri={42.5} tw={24} ty={4} size={22} mid />;

export default function App() {
  return (
    <Screen>
      <Global />
      <MenuBar>
        <MenuItems>{['General', 'Entry Area', 'Tandem Cold Mill', 'Exit Area', 'System'].map(t => <span key={t}>{t}</span>)}</MenuItems>
        <UserCell><Flag /><span>WAV127660</span><Corner /></UserCell>
        <ToolCell><svg width="20" height="20" viewBox="0 0 20 20"><circle cx="10" cy="10" r="10" /><path d="M8.500 3.500h3v2.800h-3zM8.500 7.700h3v8.500h-3z" fill="#e4e4e4" /></svg><Caret /></ToolCell>
        <ToolCell><svg width="20" height="20" viewBox="0 0 20 20"><circle cx="10" cy="10" r="10" /><path d="M6.300 7.800C6.300 2.700 14 3 13.600 7.400C13.400 9.700 10.500 9.600 10.400 12.300" fill="none" stroke="#e4e4e4" strokeWidth="2.400" /><rect x="9" y="13.700" width="2.700" height="2.600" fill="#e4e4e4" /></svg><Caret /></ToolCell>
        <ToolCell><svg width="20" height="20" viewBox="-10 -10 20 20"><g>{Array.from({ length: 12 }, (_, i) => <rect key={i} x="-1.500" y="-10" width="3" height="4" transform={`rotate(${i * 30})`} />)}</g><circle r="7.800" /><circle r="4.800" fill="#ddd" stroke="#777" strokeWidth="1.200" /></svg><Caret /></ToolCell>
        <ToolCell><Bolt /><Corner /></ToolCell>
        <ToolCell><svg width="21" height="14" viewBox="0 0 21 14"><path d="M1 7Q10.500-3.500 20 7Q10.500 17.500 1 7z" fill="#e4e4e4" stroke="#000" strokeWidth="1.800" /><circle cx="10.500" cy="7" r="4.800" /><path d="M10.500 4.500q3 0 2.500 3" stroke="#e4e4e4" strokeWidth="1.400" fill="none" /></svg><Caret /></ToolCell>
      </MenuBar>

      <Header>
        <LogoCell>
          <svg width="170" height="86" viewBox="0 31 170 86" fontWeight="bold" fill="#2b2b2b">
            <text x="5" y="81.500" fontSize="21" stroke="#2b2b2b" strokeWidth=".5" textLength="59" lengthAdjust="spacingAndGlyphs">SMS</text>
            <text x="94" y="81.500" fontSize="22.500" stroke="#2b2b2b" strokeWidth=".4" textLength="71" lengthAdjust="spacingAndGlyphs">group</text>
            <g fill="none" strokeWidth="2.200"><circle cx="79" cy="75" r="9.500" stroke="#d8262c" strokeDasharray="15 3" /><circle cx="79" cy="75" r="6.600" stroke="#2577b8" strokeDasharray="12 2" /><circle cx="79" cy="75" r="3.800" stroke="#d8262c" strokeDasharray="10 2" /></g>
            <circle cx="79" cy="75" r="2.200" />
          </svg>
        </LogoCell>
        <CoilTable>
          <CoilTitle>Coil Data Mill</CoilTitle>
          <CoilRow $h={21} $bg="#e4e4e4">
            <CoilCell $scope>Scope</CoilCell><CoilCell>Coil ID In</CoilCell><CoilCell>Coil ID Out</CoilCell><CoilCell>Alloy</CoilCell>
            <CoilCell $spread><span>Width</span><span>[in]</span></CoilCell><CoilCell $spread><span>Thickness ES</span><span>[in]</span></CoilCell>
            <CoilCell $spread><span>Thickness Tgt</span><span>[in]</span></CoilCell><CoilCell>Setup ID</CoilCell>
          </CoilRow>
          <CoilRows /><CoilRows next />
        </CoilTable>
        <Brand>
          <svg width="75" height="60" viewBox="1700 45 75 60"><path d="M1727.500 46h18L1773 74.500L1745.500 103h-18L1755 74.500z" fill="#b8060e" />
            <text transform="translate(1715 88.500) rotate(-46)" fontWeight="bold" fontSize="25" stroke="#000" strokeWidth="1" textLength="33" lengthAdjust="spacingAndGlyphs">SDI</text></svg>
        </Brand>
        <Clock><span>Tuesday</span><span>3/2/2021</span><ClockTime>1:22:32 PM</ClockTime></Clock>
      </Header>

      <NavBar>
        <NavCell $w={29}><svg width="18" height="30"><path d="M14.500 1L4 15L14.500 29" fill="none" stroke="#e8e8e8" strokeWidth="4" /></svg></NavCell>
        <NavCell $w={33} />
        <Crumbs>
          <svg width="38" height="26" viewBox="-1 0 38 26"><path d="M14 1l13 12-1.500 1.500L14 4.200L2.500 14.500L1 13zM20 2h4v7l-4-3.500z" fill="#d6d6d6" /><path d="M5 14l9-8l9 8v11h-6.500v-6h-5v6H5z" fill="#d6d6d6" /><path d="M11.500 11.500h5v4h-5z" fill="#555" /></svg>
          <CrumbArrow /><Crumb $w={158}>Tandem Cold Mill</Crumb><CrumbArrow /><Crumb $bold $w={280}>Overview - Tandem Cold Mill</Crumb>
        </Crumbs>
        <PillGroup>
          {['Media', 'Ext. System', 'System', 'Function Stop'].map(t => <Pill key={t} $w={149}><span>{t}</span><Warn round dark w={19} h={19} /><Caret $c="#fff" /></Pill>)}
          <Pill $w={128}><span>Safety</span><Bars>{[0, 1, 2, 3, 4].map(i => <i key={i} />)}</Bars><Caret $c="#fff" /></Pill>
        </PillGroup>
      </NavBar>

      <Body>
        <Sidebar>
          <SideTitle>Tandem Cold Mill</SideTitle>
          <SideSection $h={188}>
            <EnsRow><b>ENS</b><TextField $w={110} $h={25} $tone="#9c9c9c">TEXT<PinnedWarn w={19} h={19} $x={45} $y={2} /></TextField></EnsRow>
            <Spacer $h={7} />
            <TextField $w={161} $h={26} $tone="#adadad" $ml={5}>TEXT<PinnedWarn w={19} h={19} $x={70} $y={3} /></TextField>
            <Frame $w={160} $h={44} $mt={9} $ml={5}><Legend $bg="#cdcdcd">Speed [fpm]</Legend>
              <FieldRow><Value w={73} h={25} text="0.0000" tri={36.5} size={15.5} pad={4} tone="#9c9c9c" /><Value w={73} h={25} text="0.0000" tri={36.5} size={15.5} pad={4} tone="#9c9c9c" /></FieldRow>
            </Frame>
            <LooperBox>
              <LooperHead><span>Looper Filling</span><span>[%/s]</span></LooperHead>
              <LooperRow><PinnedWarn bright $x={33} $y={4} w={19} h={18} /><span>0.0</span><PlayMark width="13" height="15"><path d="M.5 1l12 6.500l-12 6.500z" fill="#0a5cc4" stroke="#0a2a60" /></PlayMark><PinnedWarn bright $x={117} $y={3} w={19} h={18} /><b>:</b></LooperRow>
            </LooperBox>
            <MarkRow><svg width="7" height="6"><path d="M3.500 1L6 5H1z" fill="none" stroke="#3fb53f" /></svg><svg width="7" height="6"><path d="M3.500 1L6 5H1z" fill="none" stroke="#d02020" /></svg></MarkRow>
          </SideSection>
          <SideSection $h={105}>
            <TcmRow><span>TCM</span><Digits>88:88</Digits></TcmRow>
            <SubHead>Mill Speed</SubHead>
            <Panel $h={50}><PanelHead><span>Speed Master</span><span>[fpm]</span></PanelHead><BigValue text="0.00" /></Panel>
          </SideSection>
          <SideSection $h={74}>
            <SubHead>Stop Distance</SubHead>
            <Panel $h={50}><PanelHead><span>To Defect Grade</span><span>[ft]</span></PanelHead><BigValue text="0.00" /></Panel>
          </SideSection>
          <SideSection $h={171}>
            <SubHead>Slow Down Distance</SubHead>
            {distances.map(([name, value]) => (
              <Panel key={name} $h={46} $mb={4}><PanelHead><span>{name}</span><span>[ft]</span></PanelHead><BigValue text={value} /></Panel>
            ))}
          </SideSection>
          <SideSection $h={276}>
            <Frame $w={160} $h={45} $mt={8} $ml={5} $c="#aaa"><Legend $bg="#cdcdcd">Mode</Legend><PinnedWarn round w={20} h={19} $x={126} $y={-9} />
              <Spacer $h={11} />
              <ModeField>No Mode Selected<PinnedWarn bright w={20} h={19} $x={64} $y={2} /></ModeField></Frame>
            <Frame $w={160} $h={141} $mt={8} $ml={5} $c="#aaa"><Legend $bg="#cdcdcd">Production</Legend>
              <Spacer $h={6} />
              {['Master Mode', 'Threading', 'Tailing Out'].map(t => <React.Fragment key={t}><ModeLabel>{t}</ModeLabel><ModeField>----------<PinnedWarn bright w={20} h={19} $x={64} $y={2} /></ModeField></React.Fragment>)}
            </Frame>
            <Spacer $h={5} />
            <SideButton><span>Functions &amp; Modes</span><RightCaret /></SideButton>
            <SideButton><span>Load Distribution</span><RightCaret /></SideButton>
          </SideSection>
        </Sidebar>
        <Main>
          <ProcessCanvas />
          <ChartArea>
            {charts.map(c => <Chart key={c.title} {...c} />)}
            <TabStrip><Tab $h={63} $on>Graphic</Tab><Tab $h={64}>Numeric</Tab><Tab $h={64}>Cond.</Tab><Tab $h={61}>Status</Tab></TabStrip>
          </ChartArea>
        </Main>
      </Body>

      <MessageBar><AlarmCell><Bolt /><Corner /></AlarmCell><Message>No connection to data server!</Message></MessageBar>
      <Footer>
        <FootButton $w={128} $big>Tr. Entry</FootButton><FootButton $w={125} $big $on>TCM</FootButton><FootButton $w={124} $big>Tr. Exit</FootButton>
        <FootButton $w={4} />
        {footTabs.map(t => <FootButton key={t} $w={128}>{t}</FootButton>)}
        <FootButton $w={151} />
        <FootButton $w={59}><svg width="25" height="26"><path d="M0 2h25v17H15v3h4v2H6v-2h4v-3H0z" fill="#fff" /><path d="M2.500 4.500h9v5.500h-9zM13 4.500h9.500v5.500H13zM2.500 11.500h9V17h-9zM13 11.500h9.500V17H13z" fill="#4a4a4a" /></svg><Caret $up $c="#fff" /></FootButton>
        <FootButton $w={59}><svg width="27" height="26"><path d="M0 2h25v17H15v3h4v2H6v-2h4v-3H0z" fill="#fff" /><path d="M2.500 4.500h20V17h-20z" fill="#bbb" /><circle cx="21" cy="15" r="4" fill="#444" stroke="#fff" strokeWidth="1.500" /><path d="M21 19v7M21 23h3" stroke="#fff" strokeWidth="1.700" /></svg><Caret $up $c="#fff" /></FootButton>
        <FootButton $w={59}><svg width="24" height="20"><path d="M0 4h10V1h9v3h5v16H0z" fill="#fff" /><path d="M2 5h4M11 2.500h6" stroke="#555" /><circle cx="14.500" cy="12" r="4.600" fill="#fff" stroke="#444" strokeWidth="2.500" /></svg></FootButton>
        <FootButton $w={58}><svg width="25" height="26"><path d="M2 7h17v17H2z" fill="#4a4a4a" stroke="#fff" strokeWidth="4" /><path d="M5 12l5.500 6L22 2.500" fill="none" stroke="#444" strokeWidth="6" /><path d="M5.500 12l5 5.500L23 2" fill="none" stroke="#fff" strokeWidth="4" /></svg></FootButton>
      </Footer>

      <SafetyPopup>
        <PopupTitle>Safety</PopupTitle>
        <PopupBody>
          {['Communication', 'Safety System', 'E-Stops', 'Danger Zones', 'Door Request'].map((t, i) => (
            <PopupItem key={t} $focus={i === 0}><Warn round w={19} h={18} /><span>{t}</span>{i < 3 ? <Caret $c="#fff" /> : <Corner $c={i === 4 ? '#000' : '#fff'} />}</PopupItem>
          ))}
        </PopupBody>
      </SafetyPopup>
      <TimerDialog />
    </Screen>
  );
}
